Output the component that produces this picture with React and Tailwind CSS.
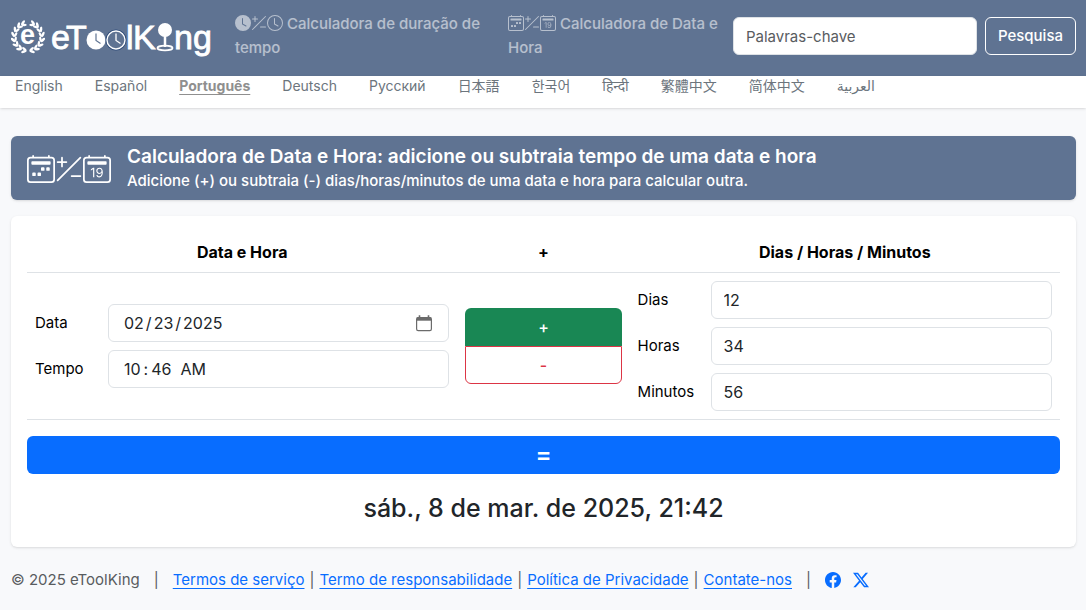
import { useState } from "react"
import {
  BsCalendar2Date,
  BsCalendar2Week,
  BsClock,
  BsClockFill,
  BsFacebook,
  BsPlusSlashMinus,
  BsTwitterX,
} from "react-icons/bs"

const languages = [
  { code: "en", label: "English" },
  { code: "es", label: "Español" },
  { code: "pt", label: "Português" },
  { code: "de", label: "Deutsch" },
  { code: "ru", label: "Русский" },
  { code: "ja", label: "日本語" },
  { code: "ko", label: "한국어" },
  { code: "hi", label: "हिन्दी" },
  { code: "zh-Hant", label: "繁體中文" },
  { code: "zh-Hans", label: "简体中文" },
  { code: "ar", label: "العربية" },
]

const durations = [
  { id: "days", label: "Dias", value: 12 },
  { id: "hours", label: "Horas", value: 34 },
  { id: "minutes", label: "Minutos", value: 56 },
]

const leafAngles = [8, 29, 50, 71, 92, 113, 134, 153]

const inputClass =
  "h-[38px] w-full min-w-0 rounded-md border border-[#dee2e6] bg-white px-3 text-base text-[#212529]"

function Laurel() {
  return (
    <g fill="#fff">
      {[1, -1].map((side) =>
        leafAngles.map((a) => (
          <g key={`${side}${a}`} transform={`translate(17 23) scale(${side} 1) rotate(${-a})`}>
            <ellipse cx="2" cy="15" rx="2.9" ry="1.3" transform="rotate(28 2 15)" />
            <ellipse cx="2" cy="12.4" rx="2.6" ry="1.2" transform="rotate(-28 2 12.4)" />
          </g>
        ))
      )}
    </g>
  )
}

function Logo() {
  return (
    <svg width="203" height="46" viewBox="0 0 203 46" role="img" aria-label="eToolKing" className="block">
      <Laurel />
      <g fill="#fff" stroke="#fff" strokeWidth="0.8" fontFamily="Liberation Sans, Arial, sans-serif" fontSize="34">
        <text x="9" y="30" fontSize="27" fontWeight="700" strokeWidth="0">e</text>
        <text x="40 55" y="35">eT</text>
        <text x="115 122" y="35">lK</text>
        <text x="163 182" y="35">ng</text>
      </g>
      <circle cx="85" cy="26" r="9.5" fill="#fff" />
      <path d="M85 19.5v7l4.5 3" fill="none" stroke="#5f7392" strokeWidth="1.2" />
      <circle cx="105" cy="26" r="9.5" fill="none" stroke="#2c4a78" strokeWidth="2" />
      <circle cx="105" cy="26" r="9" fill="none" stroke="#fff" strokeWidth="1.4" />
      <path d="M105 19.5v7l4.5 3" fill="none" stroke="#fff" strokeWidth="1.3" />
      <circle cx="154" cy="16" r="7" fill="#fff" />
      <path d="M154 20v13" stroke="#fff" strokeWidth="2.5" />
      <ellipse cx="154" cy="34" rx="7.5" ry="2.4" fill="none" stroke="#fff" strokeWidth="1.8" />
    </svg>
  )
}

function Header() {
  return (
    <header className="bg-[#5f7392]">
      <div className="flex items-center pt-3 pr-[10px] pb-4 pl-[11px]">
        <a href="/pt" className="shrink-0 pt-[2px]">
          <Logo />
        </a>
        <nav className="grid flex-1 grid-cols-[5fr_4fr] text-[15px] leading-6 font-medium text-white/55">
          <a href="/pt/duracao" className="pr-3 pl-[21px]">
            <BsClockFill className="inline size-4 align-[-2px]" />
            <BsPlusSlashMinus className="inline size-4 align-[-2px]" />
            <BsClock className="inline size-4 align-[-2px]" /> Calculadora de duração de tempo
          </a>
          <a href="/pt/data" className="pl-2">
            <BsCalendar2Week className="inline size-4 align-[-2px]" />
            <BsPlusSlashMinus className="inline size-4 align-[-2px]" />
            <BsCalendar2Date className="inline size-4 align-[-2px]" /> Calculadora de Data e Hora
          </a>
        </nav>
        <form role="search" className="ml-1 flex gap-2 text-[15px]" onSubmit={(e) => e.preventDefault()}>
          <input
            type="search"
            aria-label="Palavras-chave"
            placeholder="Palavras-chave"
            className="h-[38px] w-[244px] rounded-md border border-[#dee2e6] bg-white px-3 placeholder:text-[#595c5f]"
          />
          <button type="submit" className="h-[38px] rounded-md border border-white px-3 font-medium text-white">
            Pesquisa
          </button>
        </form>
      </div>
    </header>
  )
}

function LanguageBar() {
  return (
    <nav className="flex h-8 gap-8 bg-white px-[15px] text-sm whitespace-nowrap text-[#6c757d] shadow-sm">
      {languages.map((lang) => (
        <a
          key={lang.code}
          href={`/${lang.code}`}
          lang={lang.code}
          className={lang.code === "pt" ? "font-bold text-[#8f8f8f] underline underline-offset-3" : ""}
        >
          {lang.label}
        </a>
      ))}
    </nav>
  )
}

function Banner() {
  return (
    <div className="flex items-center gap-4 rounded-md bg-[#5f7392] px-4 pt-[9px] pb-[7px] text-white shadow-sm">
      <div className="flex shrink-0 text-[28px]">
        <BsCalendar2Week />
        <BsPlusSlashMinus />
        <BsCalendar2Date />
      </div>
      <div>
        <h1 className="text-[19px] leading-6 font-semibold">
          Calculadora de Data e Hora: adicione ou subtraia tempo de uma data e hora
        </h1>
        <p className="text-[15px] leading-6 font-medium">
          Adicione (+) ou subtraia (-) dias/horas/minutos de uma data e hora para calcular outra.
        </p>
      </div>
    </div>
  )
}

function Field({ id, label, children }) {
  return (
    <div className="relative flex items-center">
      <label htmlFor={id} className="w-[73px] shrink-0 text-[15px] leading-6">
        {label}
      </label>
      {children}
    </div>
  )
}

function CalendarIcon() {
  return (
    <svg
      viewBox="0 0 16 17"
      className="pointer-events-none absolute right-[17px] h-[17px] w-4"
      fill="none"
      stroke="#6b6b6b"
      aria-hidden="true"
    >
      <rect x="0.6" y="2.6" width="14.8" height="13" rx="1.6" strokeWidth="1.2" />
      <path d="M0.8 4h14.4" strokeWidth="3.4" />
      <path d="M3.5 0.3v3M12.5 0.3v3" strokeWidth="1.6" />
    </svg>
  )
}

function Calculator() {
  const [sign, setSign] = useState("+")

  return (
    <form className="rounded-md bg-white p-4 text-black shadow-sm" onSubmit={(e) => e.preventDefault()}>
      <div className="grid grid-cols-[5fr_2fr_5fr] border-b border-[#dee2e6] py-2 text-center font-bold">
        <h2>Data e Hora</h2>
        <h2>{sign}</h2>
        <h2>Dias / Horas / Minutos</h2>
      </div>

      <div className="grid grid-cols-[5fr_2fr_5fr] items-center border-b border-[#dee2e6] py-2">
        <div className="space-y-2 px-2">
          <Field id="date" label="Data">
            <input
              id="date"
              type="date"
              defaultValue="2025-02-23"
              className={`${inputClass} [&::-webkit-calendar-picker-indicator]:opacity-0 [&::-webkit-datetime-edit]:pl-[2px] [&::-webkit-datetime-edit-text]:px-px`}
            />
            <CalendarIcon />
          </Field>
          <Field id="time" label="Tempo">
            <input
              id="time"
              type="time"
              defaultValue="10:46"
              className={`${inputClass} [&::-webkit-calendar-picker-indicator]:hidden [&::-webkit-datetime-edit]:pl-[2px] [&::-webkit-datetime-edit-text]:px-[2px]`}
            />
          </Field>
        </div>

        <div className="flex flex-col px-2 font-medium">
          <button
            type="button"
            aria-pressed={sign === "+"}
            onClick={() => setSign("+")}
            className="h-[38px] rounded-t-md bg-[#198754] text-white"
          >
            +
          </button>
          <button
            type="button"
            aria-pressed={sign === "-"}
            onClick={() => setSign("-")}
            className="h-[38px] rounded-b-md border border-[#dc3545] text-[#dc3545]"
          >
            -
          </button>
        </div>

        <div className="space-y-2 px-2">
          {durations.map((d) => (
            <Field key={d.id} id={d.id} label={d.label}>
              <input id={d.id} type="text" inputMode="numeric" defaultValue={d.value} className={inputClass} />
            </Field>
          ))}
        </div>
      </div>

      <button type="submit" className="mt-4 h-[38px] w-full rounded-md bg-[#086dff] text-2xl font-semibold text-white">
        =
      </button>
      <p className="mt-[18px] mb-[6px] text-center text-[25px] leading-[33px] font-medium text-[#212529]">
        sáb., 8 de mar. de 2025, 21:42
      </p>
    </form>
  )
}

function Footer() {
  const link = "text-[#086dff] underline underline-offset-3"

  return (
    <footer className="flex flex-wrap items-center px-[11px] py-[21px] text-[15px] leading-6 text-[#595c5f]">
      <span>© 2025 eToolKing</span>
      <span className="px-[14px]">|</span>
      <a href="/pt/termos" className={link}>Termos de serviço</a>
      <span className="px-[5px]">|</span>
      <a href="/pt/responsabilidade" className={link}>Termo de responsabilidade</a>
      <span className="px-[5px]">|</span>
      <a href="/pt/privacidade" className={link}>Política de Privacidade</a>
      <span className="px-[5px]">|</span>
      <a href="/pt/contato" className={link}>Contate-nos</a>
      <span className="px-[14px]">|</span>
      <a href="https://facebook.com" aria-label="Facebook" className="mr-3 text-base text-[#086dff]">
        <BsFacebook />
      </a>
      <a href="https://x.com" aria-label="X" className="text-base text-[#086dff]">
        <BsTwitterX />
      </a>
    </footer>
  )
}

function App() {
  return (
    <div className="min-h-screen bg-[#f8f9fb] font-['Inter','Noto_Sans_CJK_JP','Noto_Sans_CJK_KR','Noto_Sans','DejaVu_Sans',sans-serif]">
      <Header />
      <LanguageBar />
      <main className="space-y-4 pt-7 pr-[10px] pl-[11px]">
        <Banner />
        <Calculator />
      </main>
      <Footer />
    </div>
  )
}

export default App
